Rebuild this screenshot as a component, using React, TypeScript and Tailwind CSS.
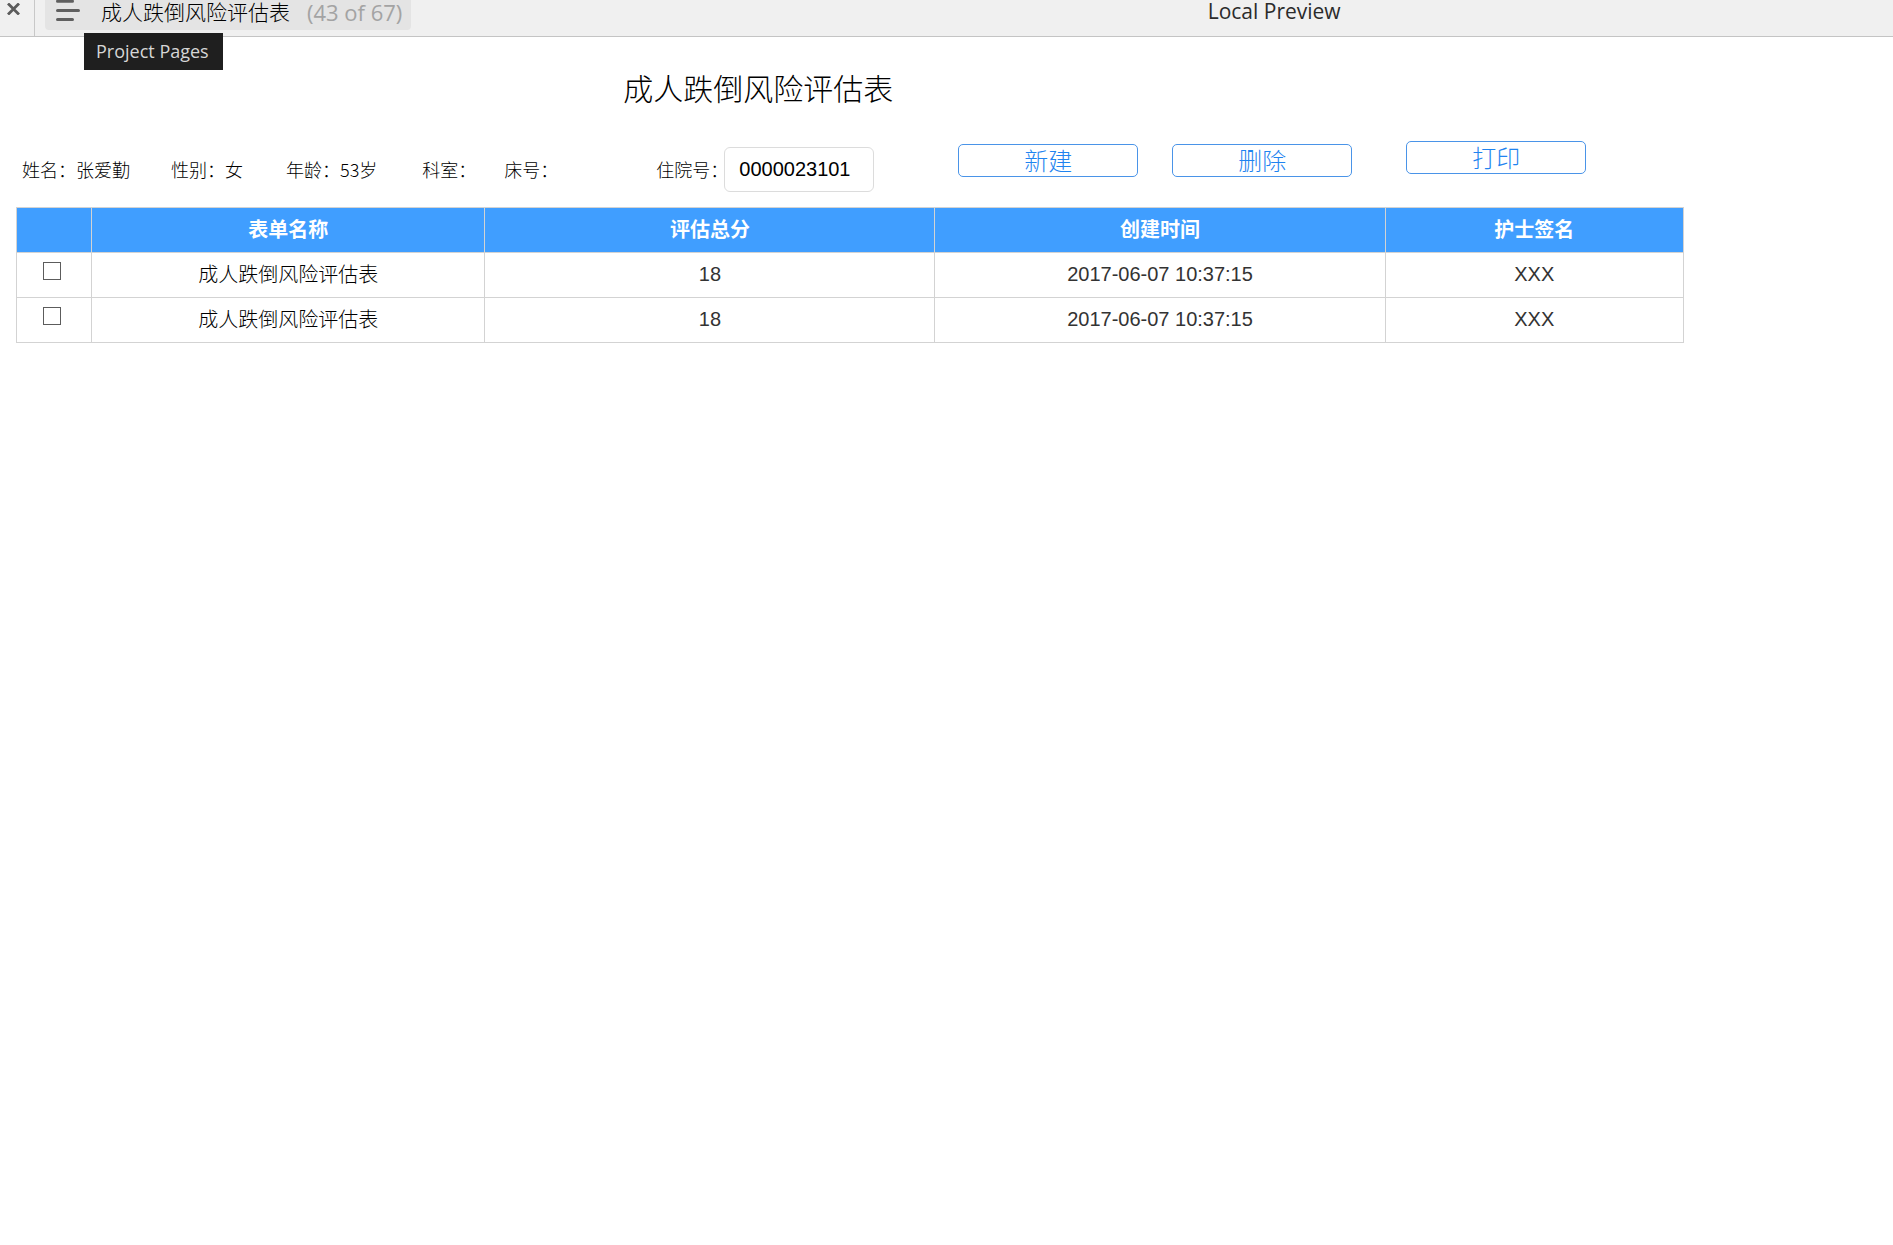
import React from "react";

const patient = [
  { label: "姓名", value: "张爱勤", space: "mr-[41px]" },
  { label: "性别", value: "女", space: "mr-[43px]" },
  { label: "年龄", value: "53岁", space: "mr-[45px]" },
  { label: "科室", value: "", space: "mr-7" },
  { label: "床号", value: "", space: "mr-[98px]" },
];

const rows = [
  { id: 1, name: "成人跌倒风险评估表", score: "18", created: "2017-06-07 10:37:15", nurse: "XXX" },
  { id: 2, name: "成人跌倒风险评估表", score: "18", created: "2017-06-07 10:37:15", nurse: "XXX" },
];

const cell = "h-[45px] border border-[#d3d3d3] p-0 text-center align-middle";

function TopBar() {
  return (
    <header className="flex h-[37px] items-start border-b border-[#c4c4c4] bg-[#f0f0f0] font-['Open_Sans','Noto_Sans_CJK_SC',sans-serif]">
      <button type="button" aria-label="Close" className="flex h-9 w-[35px] shrink-0 items-start border-r border-[#c8c8c8] pt-[3px] pl-[7px]">
        <svg width="13" height="12" viewBox="0 0 13 12" fill="none" stroke="#5c5c5c" strokeWidth="2.8">
          <path d="M1 0.5 12 11.5M12 0.5 1 11.5" />
        </svg>
      </button>
      <div className="relative ml-[10px] shrink-0">
        <button
          type="button"
          aria-describedby="pages-tip"
          className="flex h-[30px] items-start rounded-b bg-[#e4e4e4] pr-[9px] pl-[11px] text-[21px] leading-6 whitespace-nowrap text-[#333]"
        >
          <svg className="mr-[21px]" width="24" height="22" viewBox="0 0 24 22" fill="none" stroke="#5f5f5f" strokeWidth="3" strokeLinecap="round">
            <path d="M1.5 1.3H16.5M1.5 10.5H22.5M1.5 19.5H16.5" />
          </svg>
          <span className="font-light text-black">成人跌倒风险评估表</span>
          <span className="ml-[17px] text-[22px] text-[#a3a3a3]">(43 of 67)</span>
        </button>
        <div id="pages-tip" role="tooltip" className="absolute top-[33px] left-[39px] z-10 bg-[#1f1f1f] pr-[14px] pl-3 py-[6px] text-lg leading-[25px] whitespace-nowrap text-[#d6d6d6]">
          Project Pages
        </div>
      </div>
      <div className="flex-1 pl-[244px] text-center text-[21px] leading-[22px] text-[#2b2b2b]">Local Preview</div>
    </header>
  );
}

function ActionButton({ children }: { children: React.ReactNode }) {
  return (
    <button type="button" className="flex h-[33px] w-[180px] items-center justify-center rounded-[5px] border border-[#4a94e8] bg-white pt-[2px] text-2xl leading-none font-light text-[#1f84f0]">
      {children}
    </button>
  );
}

export default function App() {
  return (
    <div className="min-h-screen bg-white font-['Liberation_Sans','Noto_Sans_CJK_SC',sans-serif] text-[#333]">
      <TopBar />
      <main className="pt-7">
        <h1 className="w-4/5 pl-[2px] text-center font-['Noto_Sans_CJK_SC',sans-serif] text-3xl leading-11 font-light text-black">成人跌倒风险评估表</h1>

        <div className="mt-8 flex items-start pl-[22px]">
          <div className="mt-[6px] flex h-11 items-center font-['Noto_Sans_CJK_SC',sans-serif] text-lg font-light whitespace-nowrap text-black">
            {patient.map((p) => (
              <span key={p.label} className={p.space}>
                {p.label}：{p.value}
              </span>
            ))}
            <label htmlFor="admission">住院号：</label>
          </div>
          <input
            id="admission"
            type="text"
            defaultValue="0000023101"
            className="mt-[6px] -ml-1 h-[45px] w-[150px] rounded-md border border-[#dcdcdc] bg-white px-[14px] text-xl text-black"
          />
          <div className="mt-[3px] ml-[84px] flex gap-[34px]">
            <ActionButton>新建</ActionButton>
            <ActionButton>删除</ActionButton>
          </div>
          <div className="ml-[54px]">
            <ActionButton>打印</ActionButton>
          </div>
        </div>

        <div className="mt-[15px] mr-[209px] ml-4">
          <table className="w-full table-fixed border-collapse text-xl leading-6">
            <thead>
              <tr className="bg-[#409eff] font-bold text-white">
                <th className={`${cell} w-[4.5%]`} aria-label="选择" />
                <th className={`${cell} w-[23.6%]`}>表单名称</th>
                <th className={`${cell} w-[27%]`}>评估总分</th>
                <th className={`${cell} w-[27%]`}>创建时间</th>
                <th className={cell}>护士签名</th>
              </tr>
            </thead>
            <tbody>
              {rows.map((r) => (
                <tr key={r.id}>
                  <td className={cell}>
                    <div className="pr-1 pb-2">
                      <input
                        type="checkbox"
                        aria-label={r.name}
                        className="mx-auto block size-[18px] appearance-none border border-[#5c5c5c] bg-white checked:bg-[#409eff]"
                      />
                    </div>
                  </td>
                  <td className={`${cell} font-light text-black`}>{r.name}</td>
                  <td className={`${cell} pb-[2px]`}>{r.score}</td>
                  <td className={`${cell} pb-[2px]`}>{r.created}</td>
                  <td className={`${cell} pb-[2px]`}>{r.nurse}</td>
                </tr>
              ))}
            </tbody>
          </table>
        </div>
      </main>
    </div>
  );
}
